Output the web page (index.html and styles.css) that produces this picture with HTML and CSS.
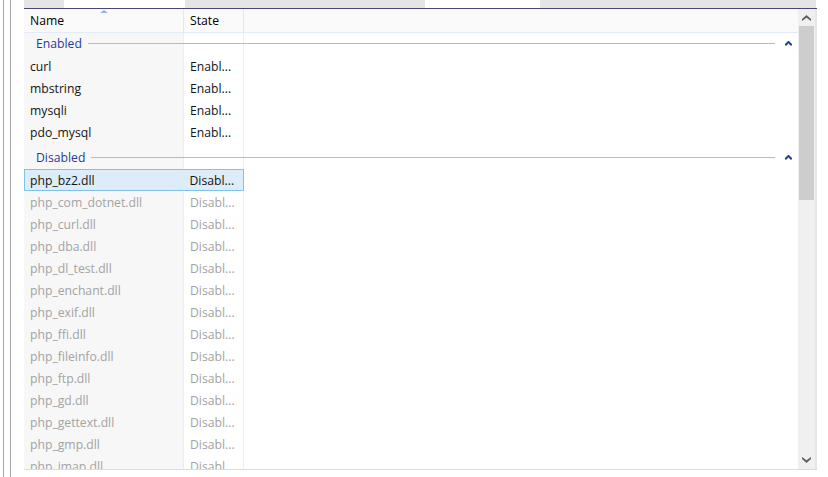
FILE: index.html
```html
<!DOCTYPE html>
<html>

<head>
    <title>Extensions</title>
    <link rel="stylesheet" href="styles.css">
</head>

<body>
    <div class="window">
        <div class="gutter">
            <div class="gutterLine"></div>
            <div class="gutterLine"></div>
        </div>
        <div class="main">
            <div class="tabs">
                <div class="tab gray" style="width: 40px"></div>
                <div class="tab white" style="width: 121px"></div>
                <div class="tab gray" style="width: 240px"></div>
                <div class="tab white" style="width: 115px"></div>
                <div class="tab gray" style="width: 276px"></div>
            </div>
            <div class="listView">
                <div class="list">
                    <div class="header">
                        <div class="col name">Name<span class="sortArrow"></span></div>
                        <div class="col state">State</div>
                    </div>

                    <div class="group">
                        <span class="groupTitle">Enabled</span>
                        <span class="groupLine"></span>
                        <span class="groupCaret"></span>
                    </div>
                    <div class="row"><div class="col name">curl</div><div class="col state">Enabl...</div></div>
                    <div class="row"><div class="col name">mbstring</div><div class="col state">Enabl...</div></div>
                    <div class="row"><div class="col name">mysqli</div><div class="col state">Enabl...</div></div>
                    <div class="row"><div class="col name">pdo_mysql</div><div class="col state">Enabl...</div></div>

                    <div class="group second">
                        <span class="groupTitle">Disabled</span>
                        <span class="groupLine"></span>
                        <span class="groupCaret"></span>
                    </div>
                    <div class="row selected"><div class="col name">php_bz2.dll</div><div class="col state">Disabl...</div></div>
                    <div class="row off"><div class="col name">php_com_dotnet.dll</div><div class="col state">Disabl...</div></div>
                    <div class="row off"><div class="col name">php_curl.dll</div><div class="col state">Disabl...</div></div>
                    <div class="row off"><div class="col name">php_dba.dll</div><div class="col state">Disabl...</div></div>
                    <div class="row off"><div class="col name">php_dl_test.dll</div><div class="col state">Disabl...</div></div>
                    <div class="row off"><div class="col name">php_enchant.dll</div><div class="col state">Disabl...</div></div>
                    <div class="row off"><div class="col name">php_exif.dll</div><div class="col state">Disabl...</div></div>
                    <div class="row off"><div class="col name">php_ffi.dll</div><div class="col state">Disabl...</div></div>
                    <div class="row off"><div class="col name">php_fileinfo.dll</div><div class="col state">Disabl...</div></div>
                    <div class="row off"><div class="col name">php_ftp.dll</div><div class="col state">Disabl...</div></div>
                    <div class="row off"><div class="col name">php_gd.dll</div><div class="col state">Disabl...</div></div>
                    <div class="row off"><div class="col name">php_gettext.dll</div><div class="col state">Disabl...</div></div>
                    <div class="row off"><div class="col name">php_gmp.dll</div><div class="col state">Disabl...</div></div>
                    <div class="row off"><div class="col name">php_imap.dll</div><div class="col state">Disabl...</div></div>
                </div>
                <div class="scrollbar">
                    <div class="scrollBtn up"></div>
                    <div class="thumb"></div>
                    <div class="track"></div>
                    <div class="scrollBtn down"></div>
                </div>
            </div>
        </div>
        <div class="rightEdge"></div>
    </div>
</body>

</html>
```

FILE: styles.css
```css
body {
    margin: 0;
    background-color: #ffffff;
    font-family: "Open Sans", "Noto Sans", sans-serif;
    font-size: 12.2px;
    color: #141414;
    overflow: hidden;
}

.window {
    display: flex;
    height: 477px;
    width: 828px;
}

.gutter {
    width: 24px;
    display: flex;
    padding-left: 3px;
    gap: 6px;
    box-sizing: border-box;
}

.gutterLine {
    width: 1px;
    background-color: #a8a8a8;
}

.main {
    width: 793px;
    display: flex;
    flex-direction: column;
}

.tabs {
    display: flex;
    height: 8px;
    border-bottom: 1px solid #4a4672;
    flex: none;
}

.tab.gray {
    background-color: #e6e4e4;
}

.tab.white {
    background-color: #ffffff;
}

.listView {
    display: flex;
    height: 460px;
    border-bottom: 1px solid #dcdcdc;
    overflow: hidden;
}

.list {
    flex: 1;
    overflow: hidden;
    background:
        linear-gradient(to right, #f7f7f7 0, #f7f7f7 159px, #ececf2 159px, #ececf2 160px, transparent 160px, transparent 219px, #edeff5 219px, #edeff5 220px, transparent 220px);
}

.header {
    display: flex;
    height: 23px;
    background-color: #fafafa;
    border-bottom: 1px solid #e3ebf8;
    position: relative;
}

.header .col {
    line-height: 23px;
    color: #000000;
}

.col.name {
    width: 160px;
    padding-left: 6px;
    box-sizing: border-box;
    white-space: nowrap;
}

.col.state {
    width: 60px;
    padding-left: 6px;
    box-sizing: border-box;
    white-space: nowrap;
}

.header .col.name {
    border-right: 1px solid #e8e8ec;
}

.header .col.state {
    border-right: 1px solid #e8e8ec;
}

.sortArrow {
    position: absolute;
    left: 76px;
    top: 1px;
    width: 0;
    height: 0;
    border-left: 4px solid transparent;
    border-right: 4px solid transparent;
    border-bottom: 3px solid #9cb4d4;
}

.group {
    display: flex;
    align-items: center;
    height: 22px;
    padding-left: 12px;
    padding-bottom: 2px;
    box-sizing: border-box;
}

.group.second {
    margin-top: 4px;
}

.groupTitle {
    color: #1f3c9c;
}

.groupLine {
    flex: 1;
    height: 1px;
    background-color: #b4bbcf;
    margin-left: 6px;
}

.groupCaret {
    width: 7px;
    height: 5px;
    margin: 0 6px 0 10px;
    background-color: #1f3c9c;
    clip-path: polygon(50% 0, 100% 70%, 100% 100%, 75% 100%, 50% 55%, 25% 100%, 0 100%, 0 70%);
}

.row {
    display: flex;
    height: 22px;
    padding-top: 2px;
    line-height: 20px;
    width: 220px;
    box-sizing: border-box;
}

.row.selected {
    background-color: #dcecf8;
    border: 1px solid #80c2ea;
    padding-top: 1px;
    line-height: 19px;
}

.row.selected .col.name {
    padding-left: 5px;
}

.row.off {
    color: #a3a3a3;
}

.scrollbar {
    width: 17px;
    background-color: #f0f0f0;
    display: flex;
    flex-direction: column;
    border-right: 2px solid #e6e6e6;
}

.scrollBtn {
    height: 17px;
    position: relative;
}

.scrollBtn::after {
    content: "";
    position: absolute;
    left: 4px;
    top: 6px;
    width: 9px;
    height: 6px;
    background-color: #606060;
}

.scrollBtn.up::after {
    clip-path: polygon(50% 0, 100% 65%, 100% 100%, 50% 45%, 0 100%, 0 65%);
}

.scrollBtn.down::after {
    top: 5px;
    clip-path: polygon(0 0, 50% 55%, 100% 0, 100% 35%, 50% 100%, 0 35%);
}

.thumb {
    height: 174px;
    margin: 0 1px;
    background-color: #cdcdcd;
}

.track {
    flex: 1;
}

.rightEdge {
    flex: 1;
    background-color: #ffffff;
}
```
